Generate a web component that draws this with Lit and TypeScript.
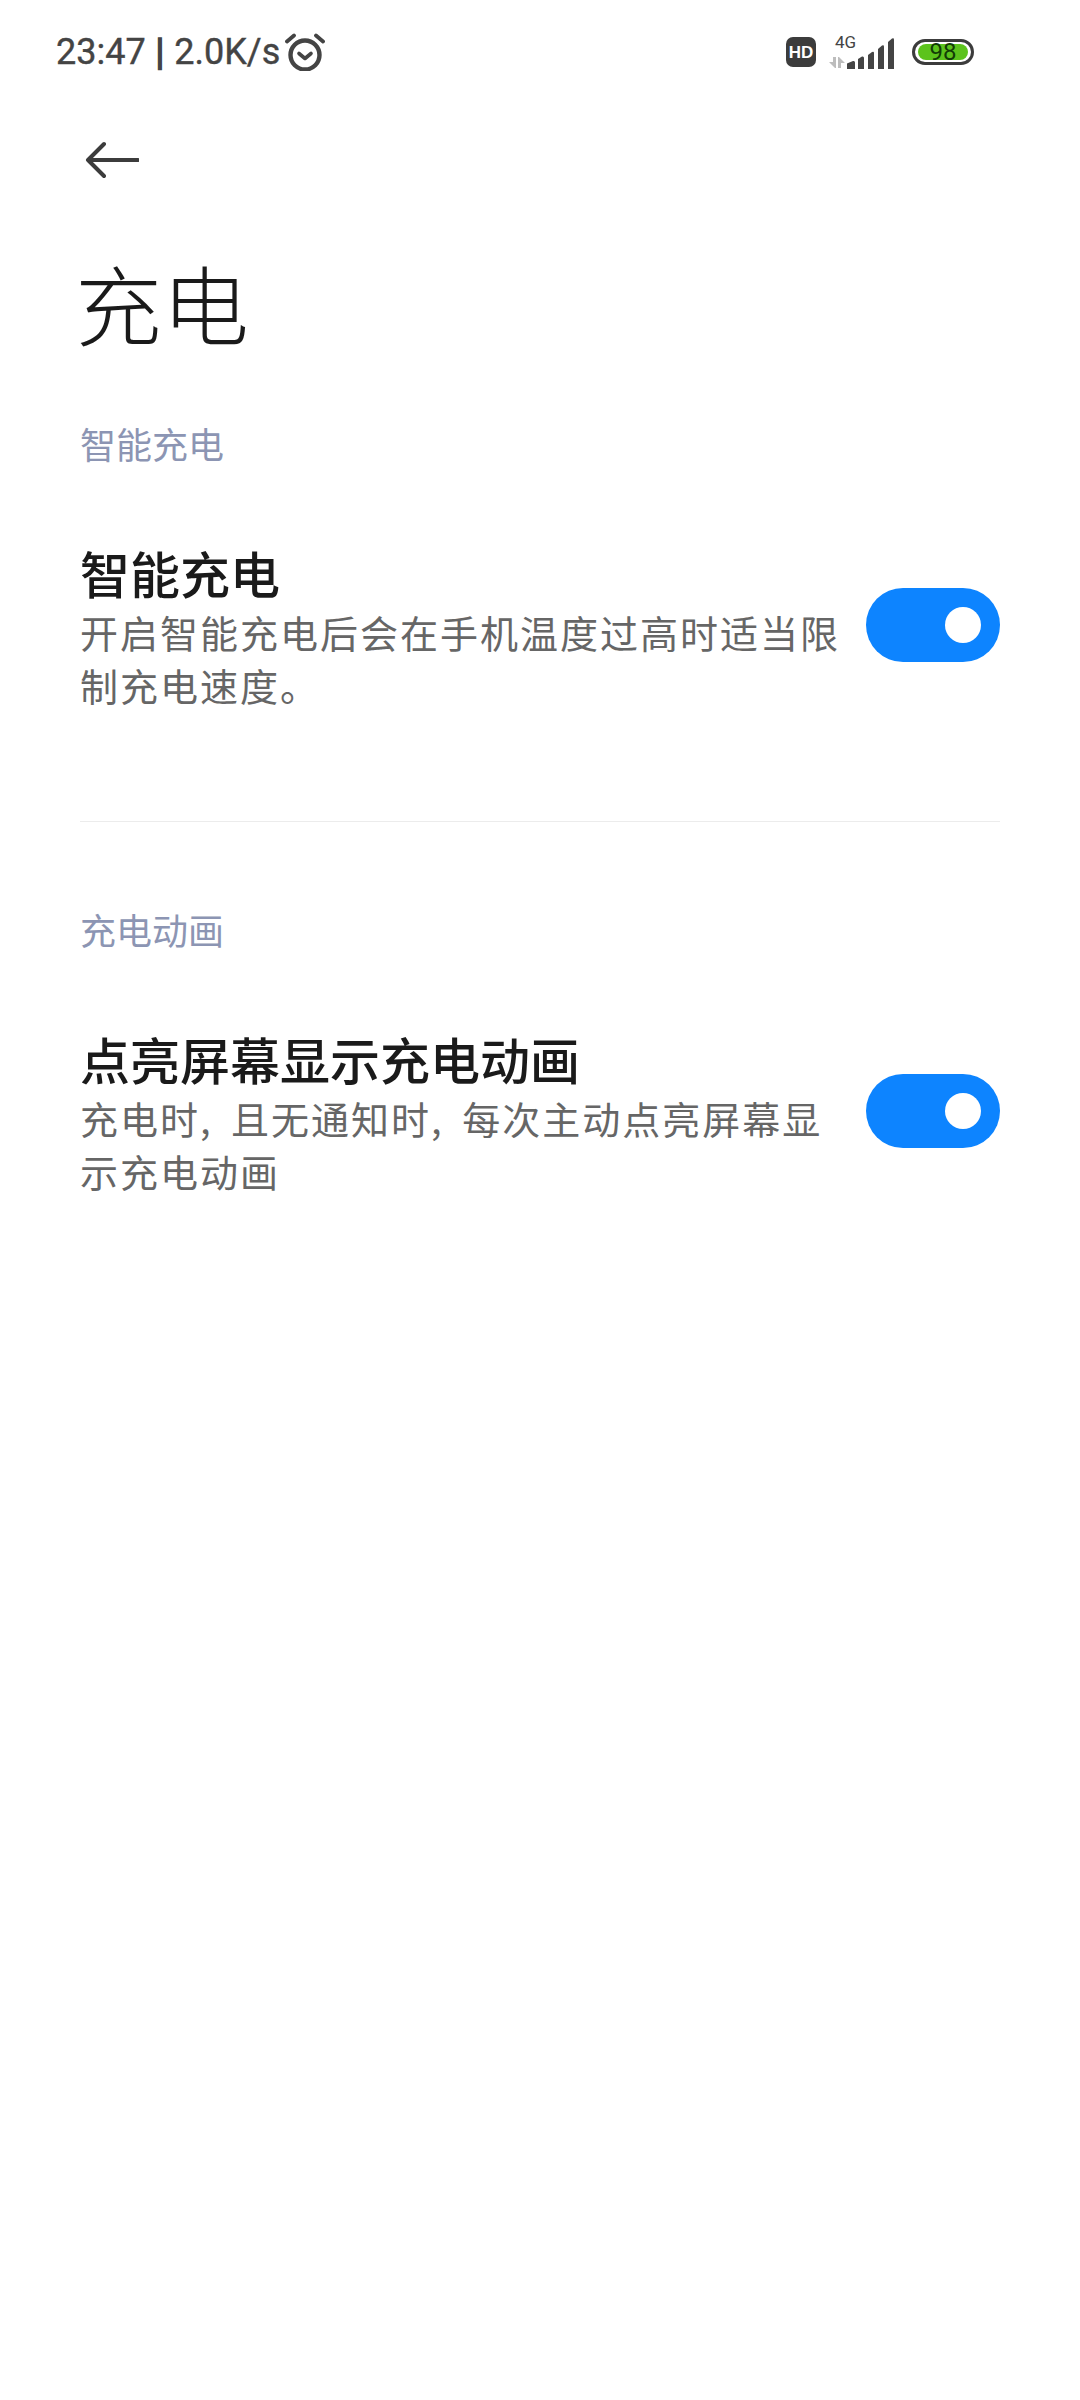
import {html, css, LitElement} from 'lit';
import {customElement} from 'lit/decorators.js';

const CJK = css`"Noto Sans CJK SC", "Noto Sans", sans-serif`;

@customElement('app-root')
export class AppRoot extends LitElement {
    static styles = css`
        :host {
            display: block;
            width: 1080px;
            height: 2400px;
            background: #fff;
            font-family: ${CJK};
            overflow: hidden;
        }
        .status {
            display: flex;
            align-items: center;
            height: 104px;
            padding: 0 0 0 56px;
            box-sizing: border-box;
        }
        .clock {
            font-family: Roboto, sans-serif;
            font-size: 36px;
            -webkit-text-stroke: 0.4px #444;
            line-height: 44px;
            color: #444;
            white-space: nowrap;
        }
        .bar { -webkit-text-stroke: 1.5px #444; margin: 0 1px; }
        .alarm { margin-left: 5px; }
        .status-right {
            display: flex;
            align-items: center;
            margin-left: auto;
            margin-right: 106px;
        }
        .signal { margin-left: 12px; }
        .battery {
            position: relative;
            margin-left: 18px;
            width: 62px;
            height: 26px;
            box-sizing: border-box;
            border: 3px solid #3c3c3c;
            border-radius: 13px;
            padding: 2px 3px;
        }
        .battery-fill {
            height: 100%;
            background: #5cc31c;
            border-radius: 8px;
        }
        .battery-num {
            position: absolute;
            inset: 0;
            display: flex;
            align-items: center;
            justify-content: center;
            font-family: Roboto, sans-serif;
            font-size: 24px;
            color: #123c06;
        }
        .back { display: block; margin: 36px 0 0 85px; }
        h1 {
            margin: 62px 0 0 75px;
            font-size: 87px;
            line-height: 120px;
            font-weight: 300;
            color: #1a1a1a;
        }
        .section { padding: 0 80px; }
        .label {
            font-size: 36px;
            line-height: 50px;
            color: #8c95b3;
        }
        .first { margin-top: 56px; }
        .row {
            display: flex;
            align-items: center;
            justify-content: space-between;
            margin-top: 71px;
        }
        .text { width: 768px; }
        .name {
            font-size: 50px;
            line-height: 66px;
            font-weight: 500;
            color: #1a1a1a;
        }
        .desc {
            font-size: 38px;
            letter-spacing: 2px;
            word-spacing: 8px;
            line-height: 53px;
            color: #666;
        }
        .switch {
            flex: none;
            display: flex;
            align-items: center;
            justify-content: flex-end;
            width: 134px;
            height: 74px;
            padding-right: 19px;
            box-sizing: border-box;
            border-radius: 37px;
            background: #0d84ff;
        }
        .knob {
            width: 36px;
            height: 36px;
            border-radius: 50%;
            background: #fff;
        }
        .divider {
            height: 1px;
            margin: 110px 80px 0;
            background: #ececec;
        }
        .second { margin-top: 82px; }
    `;

    item(name: string, desc: string) {
        return html`
            <div class="row">
                <div class="text">
                    <div class="name">${name}</div>
                    <div class="desc">${desc}</div>
                </div>
                <div class="switch"><div class="knob"></div></div>
            </div>
        `;
    }

    render() {
        return html`
            <div class="status">
                <span class="clock">23:47 <span class="bar">|</span> 2.0K/s</span>
                <svg class="alarm" width="40" height="38" viewBox="0 0 40 38" fill="none" stroke="#444" stroke-linecap="round" stroke-linejoin="round">
                    <circle cx="20" cy="22" r="14.5" stroke-width="4.4"/>
                    <path d="M14 20.500l6 5 6-5" stroke-width="3.600"/>
                    <path d="M2 8.500l7-6M38 8.500l-7-6" stroke-width="3.800"/>
                </svg>
                <div class="status-right">
                    <svg width="30" height="30" viewBox="0 0 30 30">
                        <rect width="30" height="30" rx="7" fill="#3c3c3c"/>
                        <text x="15" y="21" text-anchor="middle" font-family="Liberation Sans" font-size="17" font-weight="700" fill="#fff">HD</text>
                    </svg>
                    <svg class="signal" width="66" height="34" viewBox="0 0 66 34">
                        <text x="7" y="13" font-family="Roboto" font-size="17" fill="#444">4G</text>
                        <path d="M8 22v11H7L1 27h4v-5zM10 33V22h1l6 6h-4v5z" fill="#bdbdbd"/>
                        <path d="M19 28.500l6-2.500q2-.5 2 1.500V34h-8z" fill="#444"/>
                        <path d="M30 24l4-2.500q2-.5 2 1.500V34h-6z" fill="#444"/>
                        <path d="M40 20l4-3q2-1 2 1V34h-6z" fill="#444"/>
                        <path d="M50 14l4-3.500q2-1 2 1V34h-6z" fill="#444"/>
                        <path d="M60 7l4-3.500q2-1 2 1V34h-6z" fill="#444"/>
                    </svg>
                    <div class="battery">
                        <div class="battery-fill"></div>
                        <div class="battery-num">98</div>
                    </div>
                </div>
            </div>
            <svg class="back" width="54" height="40" viewBox="0 0 54 40" fill="none" stroke="#3c3c3c" stroke-width="4" stroke-linecap="round" stroke-linejoin="round">
                <path d="M3 20h50M19 4L3 20l16 16"/>
            </svg>
            <h1>充电</h1>
            <div class="section first">
                <div class="label">智能充电</div>
                ${this.item('智能充电', '开启智能充电后会在手机温度过高时适当限制充电速度。')}
            </div>
            <div class="divider"></div>
            <div class="section second">
                <div class="label">充电动画</div>
                ${this.item('点亮屏幕显示充电动画', '充电时, 且无通知时, 每次主动点亮屏幕显示充电动画')}
            </div>
        `;
    }
}
